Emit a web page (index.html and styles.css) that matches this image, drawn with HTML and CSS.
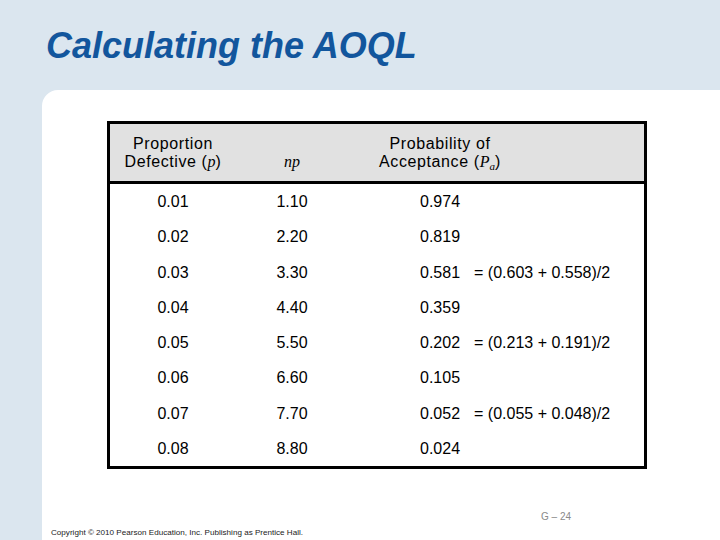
FILE: index.html
```html
<!DOCTYPE html>
<html>
<head>
<meta charset="utf-8">
<link rel="stylesheet" href="styles.css">
</head>
<body>
<header class="top">
  <h1 class="title">Calculating the AOQL</h1>
</header>
<main class="panel">
  <div class="table">
    <div class="thead">
      <div class="th">Proportion<br>Defective (<i class="var">p</i>)</div>
      <div class="th">&nbsp;<br><i class="var">np</i></div>
      <div class="th">Probability of<br>Acceptance (<i class="var">P<sub>a</sub></i>)</div>
      <div class="th"></div>
    </div>
    <div class="tbody">
      <div class="td">0.01</div><div class="td">1.10</div><div class="td pa">0.974</div>
      <div class="td">0.02</div><div class="td">2.20</div><div class="td pa">0.819</div>
      <div class="td">0.03</div><div class="td">3.30</div><div class="td pa">0.581<span class="note">= (0.603 + 0.558)/2</span></div>
      <div class="td">0.04</div><div class="td">4.40</div><div class="td pa">0.359</div>
      <div class="td">0.05</div><div class="td">5.50</div><div class="td pa">0.202<span class="note">= (0.213 + 0.191)/2</span></div>
      <div class="td">0.06</div><div class="td">6.60</div><div class="td pa">0.105</div>
      <div class="td">0.07</div><div class="td">7.70</div><div class="td pa">0.052<span class="note">= (0.055 + 0.048)/2</span></div>
      <div class="td">0.08</div><div class="td">8.80</div><div class="td pa">0.024</div>
    </div>
  </div>
  <div class="page">G – 24</div>
  <div class="copy">Copyright © 2010 Pearson Education, Inc. Publishing as Prentice Hall.</div>
</main>
</body>
</html>
```
FILE: styles.css
```css
html, body {
  margin: 0;
  padding: 0;
}
body {
  width: 720px;
  height: 540px;
  overflow: hidden;
  background: #dbe6ef;
  font-family: "Liberation Sans", Arial, sans-serif;
  color: #000;
}
.top {
  height: 90px;
  box-sizing: border-box;
  padding: 26px 0 0 46px;
}
.title {
  margin: 0;
  font-size: 36px;
  line-height: 40px;
  font-weight: bold;
  font-style: italic;
  color: #12569d;
}
.panel {
  margin-left: 42px;
  height: 450px;
  background: #fff;
  border-top-left-radius: 16px;
  box-sizing: border-box;
  padding: 31px 0 0 65px;
}
.table {
  width: 540px;
  box-sizing: border-box;
  border: 3px solid #000;
}
.thead {
  display: grid;
  grid-template-columns: 126px 112px 184px 1fr;
  height: 57px;
  background: #e1e1e1;
  border-bottom: 3px solid #000;
  align-items: center;
}
.th {
  text-align: center;
  font-size: 16px;
  line-height: 17.5px;
  letter-spacing: 0.6px;
}
.var {
  font-family: "Liberation Serif", "Times New Roman", serif;
  font-style: italic;
  letter-spacing: 0;
}
.var sub {
  font-size: 11px;
  line-height: 0;
  vertical-align: -3px;
}
.tbody {
  display: grid;
  grid-template-columns: 126px 112px 1fr;
  grid-auto-rows: 35.25px;
}
.td {
  text-align: center;
  font-size: 16px;
  line-height: 35.25px;
}
.td.pa {
  text-align: left;
  padding-left: 72px;
}
.note {
  margin-left: 14px;
}
.page {
  margin: 42px 0 0 434px;
  font-size: 10px;
  line-height: 12px;
  color: #8a8a8a;
}
.copy {
  margin: 5px 0 0 -56px;
  font-size: 8.1px;
  line-height: 9px;
  color: #222;
}
```
